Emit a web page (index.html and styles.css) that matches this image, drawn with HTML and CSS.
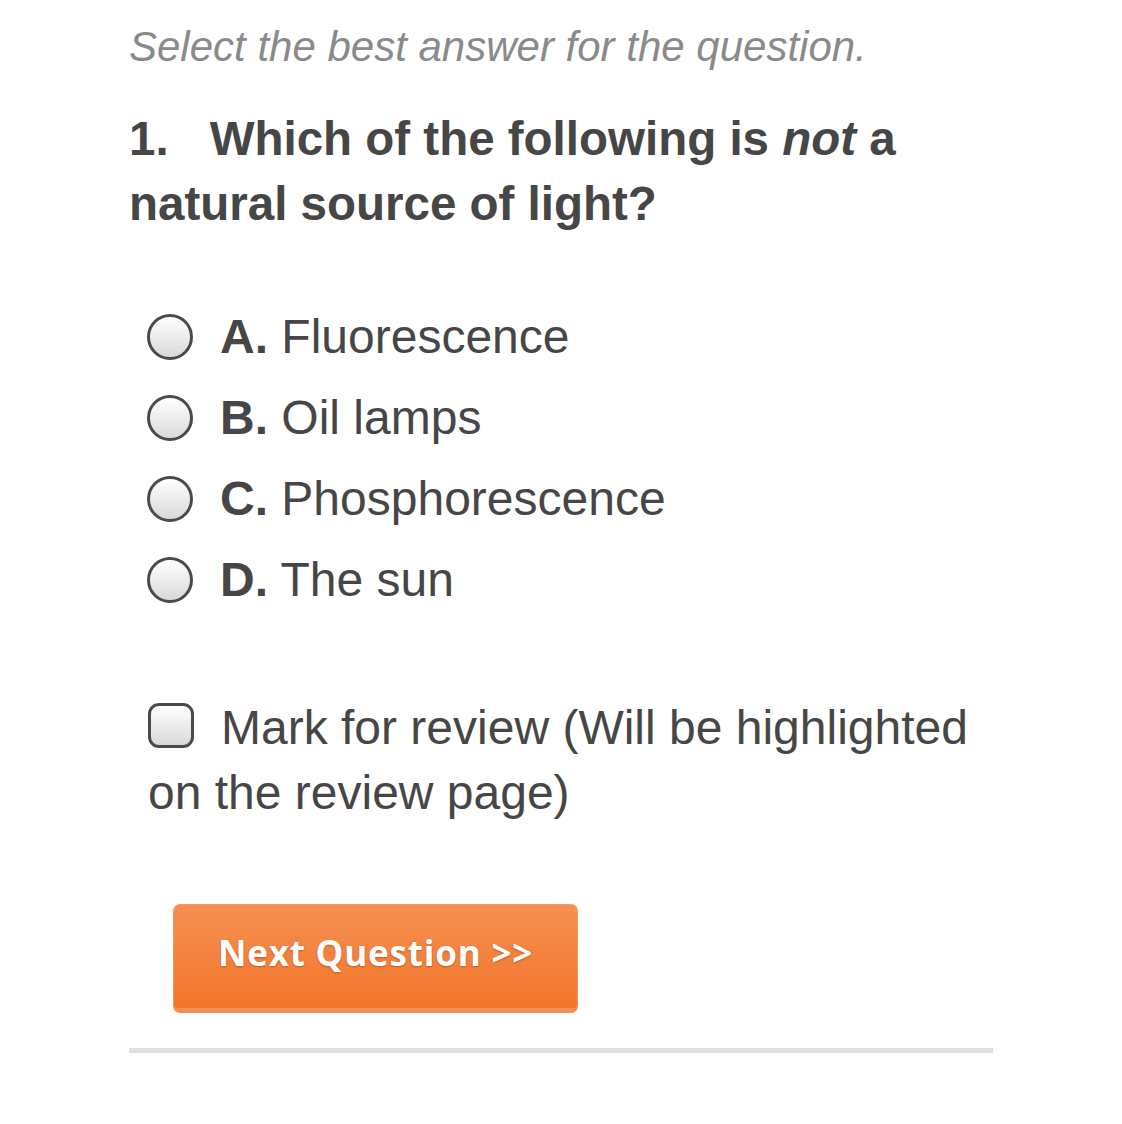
FILE: index.html
```html
<!DOCTYPE html>
<html>
<head>
<meta charset="utf-8">
<link rel="stylesheet" href="styles.css">
</head>
<body>
<div class="page">
  <p class="instructions">Select the best answer for the question.</p>
  <h2 class="question"><span class="num">1.</span>Which of the following is <em>not</em> a natural source of light?</h2>
  <ul class="options">
    <li class="option"><span class="radio"></span><span class="label"><b>A.</b> Fluorescence</span></li>
    <li class="option"><span class="radio"></span><span class="label"><b>B.</b> Oil lamps</span></li>
    <li class="option"><span class="radio"></span><span class="label"><b>C.</b> Phosphorescence</span></li>
    <li class="option"><span class="radio"></span><span class="label"><b>D.</b> The sun</span></li>
  </ul>
  <div class="review"><span class="checkbox"></span>Mark for review (Will be highlighted on the review page)</div>
  <button class="next" type="button">Next Question &gt;&gt;</button>
  <hr class="divider">
</div>
</body>
</html>
```

FILE: styles.css
```css
html, body {
  margin: 0;
  padding: 0;
  background: #ffffff;
}

.page {
  width: 864px;
  padding: 23px 0 40px 129px;
  font-family: "Liberation Sans", Arial, Helvetica, sans-serif;
  color: #464646;
}

.instructions {
  margin: 0;
  font-size: 42px;
  line-height: 48px;
  font-style: italic;
  color: #8a8a8a;
}

.question {
  margin: 35px 0 0 0;
  font-size: 47.5px;
  line-height: 65px;
  font-weight: bold;
  color: #464646;
}

.question .num {
  margin-right: 41px;
}

.question em {
  font-style: italic;
}

.options {
  list-style: none;
  margin: 60px 0 0 0;
  padding: 0 0 0 18px;
}

.option {
  display: flex;
  align-items: center;
  gap: 27px;
  height: 81px;
  font-size: 48px;
  line-height: 81px;
}

.option b {
  font-weight: bold;
}

.radio {
  box-sizing: border-box;
  width: 46px;
  height: 46px;
  border-radius: 50%;
  border: 3px solid #4a4a4a;
  background: linear-gradient(#ffffff, #d9d9d9);
  flex: none;
}

.review {
  margin: 75px 0 0 0;
  padding-left: 19px;
  font-size: 48px;
  line-height: 65px;
}

.checkbox {
  box-sizing: border-box;
  display: inline-block;
  width: 46px;
  height: 45px;
  border-radius: 11px;
  border: 3px solid #4a4a4a;
  background: linear-gradient(#ffffff, #d9d9d9);
  vertical-align: -4px;
  margin-right: 27px;
}

.next {
  display: block;
  box-sizing: border-box;
  margin: 79px 0 0 44px;
  width: 405px;
  height: 109px;
  padding: 0 0 8px 0;
  border: 1px solid #f39a62;
  border-bottom: 5px solid #f28f54;
  border-radius: 7px;
  background: linear-gradient(#f68f51, #f2762b);
  color: #ffffff;
  font-family: "Open Sans", Lato, sans-serif;
  font-weight: 700;
  font-size: 35px;
  letter-spacing: 0.8px;
  text-shadow: 0 1px 2px rgba(120, 50, 0, 0.45);
  cursor: pointer;
}

.divider {
  margin: 35px 0 0 0;
  height: 5px;
  border: 0;
  background: #e0e0e0;
}
```
